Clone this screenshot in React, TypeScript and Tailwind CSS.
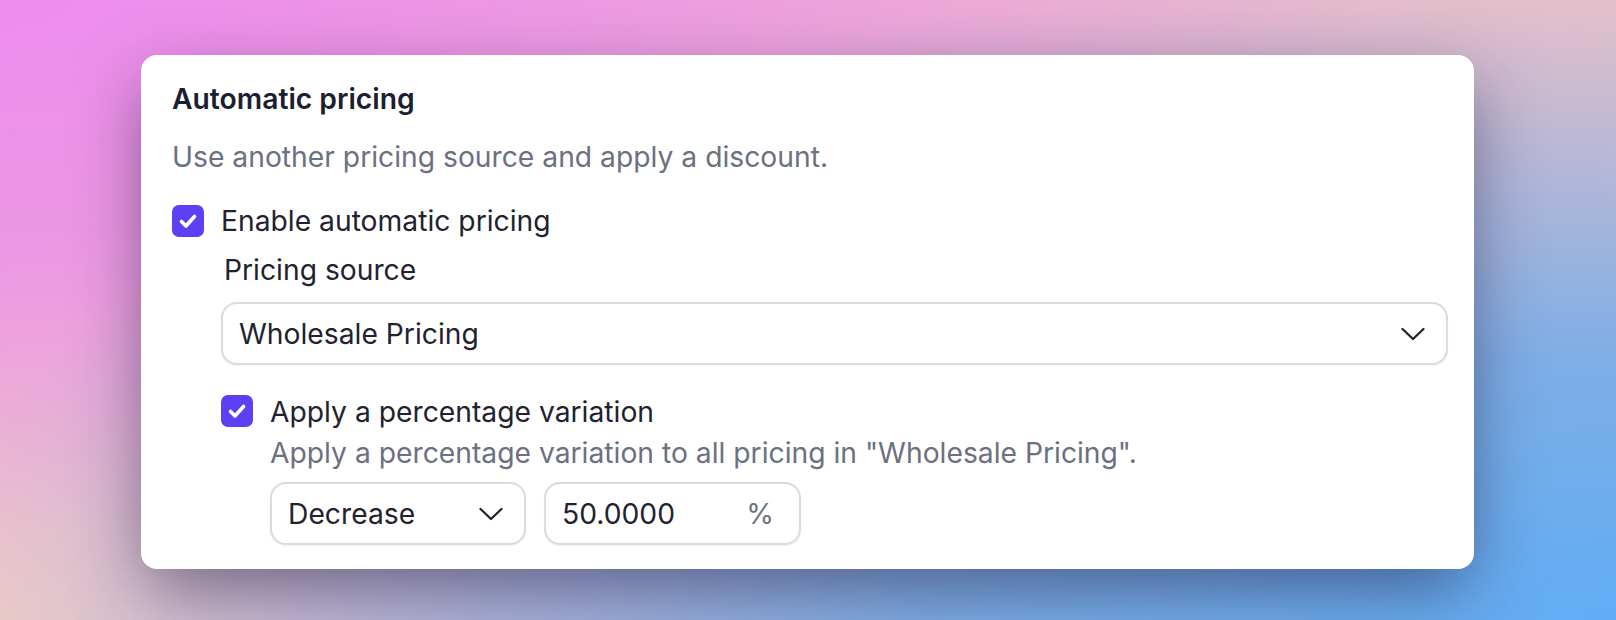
import React from "react";

function Check() {
  return (
    <div className="flex h-[32px] w-[32px] shrink-0 items-center justify-center rounded-[7px] bg-[#5b40f4]">
      <svg width="32" height="32" viewBox="0 0 32 32" fill="none">
        <path d="M9.5 16.5 L14 21 L22.5 11.5" stroke="#ffffff" strokeWidth="3.6" strokeLinecap="round" strokeLinejoin="round" />
      </svg>
    </div>
  );
}

function Chevron() {
  return (
    <svg width="24" height="14" viewBox="0 0 24 14" fill="none" className="shrink-0">
      <path d="M1.5 2 L12 12 L22.5 2" stroke="#1f2330" strokeWidth="2.3" strokeLinecap="round" strokeLinejoin="round" />
    </svg>
  );
}

export default function App() {
  return (
    <div
      className="h-[620px] w-full overflow-hidden pl-[141px] pt-[55px] bg-[radial-gradient(ellipse_at_100%_100%,#60adf5_0%,#7eaee6_30%,rgba(150,175,225,0)_75%),radial-gradient(ellipse_at_0%_0%,#ef8cef_0%,rgba(239,140,239,0)_60%),radial-gradient(ellipse_at_0%_100%,#f4ccc6_0%,rgba(244,204,198,0)_45%),linear-gradient(to_right,#e7a3d8,#efc2c6)]"
      style={{ fontFamily: "Inter, 'Noto Sans', sans-serif" }}
    >
      <div className="w-[1333px] rounded-[16px] bg-white pb-[24px] pl-[31px] pr-[26px] pt-[24px] shadow-[0_24px_70px_-6px_rgba(35,25,60,0.55)]">
        <div className="text-[28.25px] font-semibold leading-[40px] text-[#1b2030]">Automatic pricing</div>
        <div className="mt-[18px] text-[28.25px] leading-[40px] text-[#6b7180]">
          Use another pricing source and apply a discount.
        </div>

        <div className="mt-[24px] flex h-[40px] items-center gap-[17px]">
          <Check />
          <span className="text-[28.25px] leading-[40px] text-[#1f2330]">Enable automatic pricing</span>
        </div>

        <div className="ml-[49px]">
          <div className="mt-[9px] pl-[3px] text-[28.25px] leading-[40px] text-[#1f2330]">Pricing source</div>
          <div className="mt-[12px] flex h-[63px] items-center justify-between rounded-[16px] border-2 border-[#d9dbe0] bg-white pl-[16px] pr-[21px] shadow-[0_1px_2px_rgba(0,0,0,0.06)]">
            <span className="text-[28.25px] leading-[40px] text-[#1f2330]">Wholesale Pricing</span>
            <Chevron />
          </div>

          <div className="mt-[27px] flex items-start gap-[17px]">
            <div className="pt-[3px]">
              <Check />
            </div>
            <div>
              <div className="text-[28.25px] leading-[40px] text-[#1f2330]">Apply a percentage variation</div>
              <div className="mt-[1px] text-[28.25px] leading-[40px] text-[#6b7180]">
                Apply a percentage variation to all pricing in "Wholesale Pricing".
              </div>
              <div className="mt-[9px] flex gap-[18px]">
                <div className="flex h-[63px] w-[256px] items-center justify-between rounded-[16px] border-2 border-[#d9dbe0] bg-white pl-[16px] pr-[21px] shadow-[0_1px_2px_rgba(0,0,0,0.06)]">
                  <span className="text-[28.25px] leading-[40px] text-[#1f2330]">Decrease</span>
                  <Chevron />
                </div>
                <div className="flex h-[63px] w-[257px] items-center justify-between rounded-[16px] border-2 border-[#d9dbe0] bg-white pl-[16px] pr-[25px] shadow-[0_1px_2px_rgba(0,0,0,0.06)]">
                  <span className="text-[28.25px] leading-[40px] text-[#1f2330]">50.0000</span>
                  <span className="text-[28.25px] leading-[40px] text-[#6b7180]">%</span>
                </div>
              </div>
            </div>
          </div>
        </div>
      </div>
    </div>
  );
}
